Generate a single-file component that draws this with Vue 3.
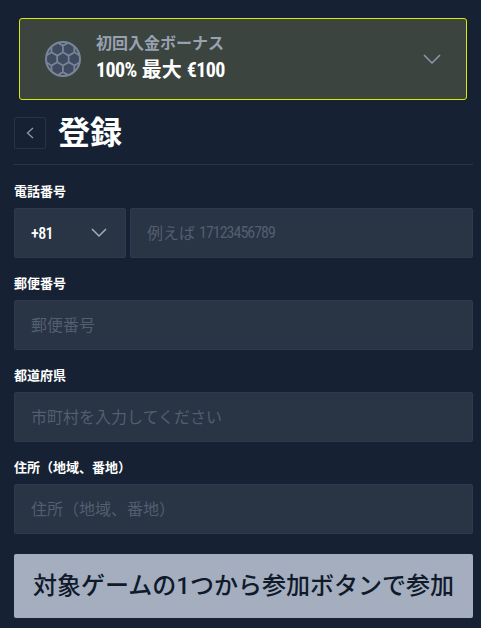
<template>
  <div class="page">
    <div class="bonus">
      <svg class="ball" viewBox="0 0 36 36" width="36" height="36">
        <defs>
          <clipPath id="ball-clip"><circle cx="18" cy="18" r="17" /></clipPath>
        </defs>
        <circle cx="18" cy="18" r="17" fill="#7a8498" />
        <g clip-path="url(#ball-clip)">
          <polygon
            v-for="(h, i) in hexes"
            :key="i"
            :points="h"
            fill="#3f4b61"
            stroke="#7a8498"
            stroke-width="1.600"
            stroke-linejoin="round"
          />
        </g>
        <circle cx="18" cy="18" r="17" fill="none" stroke="#7a8498" stroke-width="2" />
      </svg>
      <div class="bonus-text">
        <div class="bonus-title">初回入金ボーナス</div>
        <div class="bonus-value"><span class="cond">100%</span> 最大 <span class="cond">€100</span></div>
      </div>
      <svg class="chev" viewBox="0 0 18 11" width="18" height="11">
        <path d="M1 1l8 8 8-8" fill="none" stroke="#8f99ab" stroke-width="1.500" />
      </svg>
    </div>

    <div class="head">
      <button class="back" type="button">
        <svg viewBox="0 0 8 12" width="8" height="12">
          <path d="M7 1L1.500 6 7 11" fill="none" stroke="#8f99ab" stroke-width="1.300" />
        </svg>
      </button>
      <h1>登録</h1>
    </div>

    <form class="form" @submit.prevent>
      <div class="field">
        <label>電話番号</label>
        <div class="phone">
          <div class="code">
            <span class="cond">+81</span>
            <svg viewBox="0 0 16 10" width="16" height="10">
              <path d="M1 1l7 7 7-7" fill="none" stroke="#a4adbd" stroke-width="1.500" />
            </svg>
          </div>
          <div class="box tel">例えば <span class="num">17123456789</span></div>
        </div>
      </div>
      <div class="field" v-for="f in fields" :key="f.label">
        <label>{{ f.label }}</label>
        <div class="box">{{ f.hint }}</div>
      </div>
      <button class="submit" type="submit">対象ゲームの1つから参加ボタンで参加</button>
    </form>
  </div>
</template>

<script setup>
const fields = [
  { label: '郵便番号', hint: '郵便番号' },
  { label: '都道府県', hint: '市町村を入力してください' },
  { label: '住所（地域、番地）', hint: '住所（地域、番地）' },
]

// honeycomb of pointy-top hexagons around the ball's centre
const R = 6.6
const W = R * Math.sqrt(3)
const centres = []
for (let row = -2; row <= 2; row++) {
  for (let col = -2; col <= 2; col++) {
    centres.push([18 + (col + (row % 2 ? 0.5 : 0)) * W, 18 + row * R * 1.5])
  }
}
const hexes = centres.map(([cx, cy]) => {
  const pts = []
  for (let i = 0; i < 6; i++) {
    const a = Math.PI / 6 + (i * Math.PI) / 3
    pts.push((cx + R * Math.cos(a)).toFixed(2) + ',' + (cy + R * Math.sin(a)).toFixed(2))
  }
  return pts.join(' ')
})
</script>

<style>
html,
body {
  background: #162234;
}
</style>

<style scoped>
.page {
  width: 481px;
  height: 628px;
  overflow: hidden;
  box-sizing: border-box;
  padding: 18px 8px 0 14px;
  background: #162234;
  font-family: Roboto, "Noto Sans CJK JP", sans-serif;
}

.bonus {
  display: flex;
  align-items: center;
  box-sizing: border-box;
  width: 448px;
  height: 82px;
  margin-left: 5px;
  padding: 0 25px;
  background: #3b443e;
  border: 1px solid #d6ec00;
  border-radius: 3px;
}

.ball {
  flex: none;
}

.bonus-text {
  flex: 1;
  margin-left: 15px;
  margin-top: -2px;
}

.bonus-title {
  font-size: 16px;
  line-height: 24px;
  font-weight: 700;
  color: #98a1b2;
}

.bonus-value {
  font-size: 20px;
  line-height: 28px;
  font-weight: 700;
  color: #fff;
}

.cond {
  display: inline-block;
  font-stretch: 75%;
  letter-spacing: -0.6px;
}

.head {
  display: flex;
  align-items: flex-start;
  gap: 12px;
  height: 47px;
  margin-top: 17px;
  border-bottom: 1px solid #2a3548;
}

.back {
  display: flex;
  align-items: center;
  justify-content: center;
  width: 32px;
  height: 32px;
  padding: 0;
  background: transparent;
  border: 1px solid #27334a;
  border-radius: 2px;
}

h1 {
  margin: 0;
  font-size: 32px;
  line-height: 32px;
  font-weight: 700;
  color: #fff;
}

.form {
  display: flex;
  flex-direction: column;
  gap: 16px;
  margin-top: 17px;
}

.field {
  display: flex;
  flex-direction: column;
  gap: 6px;
}

label {
  font-size: 13px;
  line-height: 20px;
  font-weight: 700;
  color: #fff;
}

.phone {
  display: flex;
  gap: 4px;
}

.code {
  display: flex;
  align-items: center;
  justify-content: space-between;
  box-sizing: border-box;
  flex: none;
  width: 112px;
  height: 50px;
  padding: 0 18px 0 16px;
  background: #293445;
  border: 1px solid #2d3a50;
  border-radius: 2px;
  font-size: 16px;
  font-weight: 500;
  color: #fff;
}

.box {
  display: flex;
  align-items: center;
  box-sizing: border-box;
  height: 50px;
  padding: 0 16px 2px;
  background: #293445;
  border: 1px solid #2d3a50;
  border-radius: 2px;
  font-size: 16px;
  color: #535e6e;
  white-space: pre;
}

.tel {
  flex: 1;
}

.num {
  font-size: 16px;
  font-stretch: 75%;
  letter-spacing: -1px;
}

.submit {
  height: 64px;
  margin-top: 4px;
  padding: 0 0 5px;
  background: #a5aebf;
  border: 0;
  border-radius: 2px;
  font-family: inherit;
  font-size: 24px;
  font-weight: 500;
  color: #0f1a2b;
}
</style>
